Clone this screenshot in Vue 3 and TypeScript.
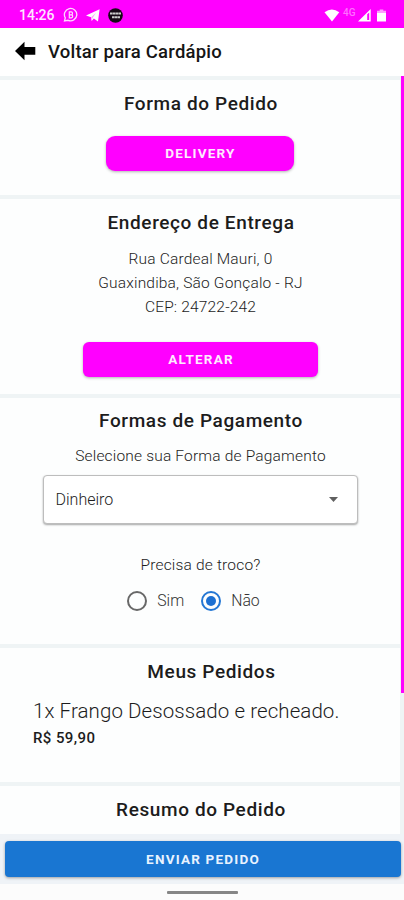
<script setup lang="ts">
import { ref } from 'vue'

interface OrderItem {
  quantity: number
  name: string
  price: string
}

const address: string[] = ['Rua Cardeal Mauri, 0', 'Guaxindiba, São Gonçalo - RJ', 'CEP: 24722-242']
const payment = ref('Dinheiro')
const change = ref('Não')
const changeOptions: string[] = ['Sim', 'Não']
const items: OrderItem[] = [{ quantity: 1, name: 'Frango Desossado e recheado.', price: 'R$ 59,90' }]
</script>

<template>
  <div class="screen">
    <div class="status">
      <span class="clock">14:26</span>
      <svg class="whats" width="16" height="16" viewBox="0 0 16 16" fill="none" stroke="#ffd9ff">
        <path d="M1.500 14l.8-3.200A6.200 6.200 0 1 1 5.200 13.300z" stroke-width="1.300" />
        <path d="M6.300 4.800h1.900q1.300 0 1.300 1.500t-1 1.500q1.200.1 1.200 1.500t-1.400 1.500H6.300zM6.500 7.800h2.200" stroke-width="1.200" />
      </svg>
      <svg class="telegram" width="14" height="13" viewBox="0 0 14 13">
        <path d="M0 6.600L13.600.3 12 12.400 7.900 9.600 5.600 12 5 8.300z" fill="#fff" />
        <path d="M5.200 8.300l4.900-4.500-3.600 5.200-.8 2z" fill="#ff9cff" />
      </svg>
      <svg class="badge" width="15" height="15" viewBox="0 0 15 15">
        <circle cx="7.500" cy="7.500" r="7.300" fill="#160a16" />
        <path d="M2 5.500h11M4 9.300h8" stroke="#ccc" stroke-width="2" stroke-dasharray="2.600 .3" fill="none" />
      </svg>
      <span class="spacer"></span>
      <svg class="wifi" width="16" height="13" viewBox="0 0 16 13">
        <path d="M.5 3.200Q7.800-2.300 15.300 3.200L8 12.500z" fill="#fff" />
      </svg>
      <span class="network">4G</span>
      <svg class="signal" width="13" height="13" viewBox="0 0 13 13">
        <path fill-rule="evenodd" d="M0 12.500L12.700 0v12.500zM9.200 5.300v5.600h2V3.400z" fill="#fff" />
      </svg>
      <svg class="battery" width="9" height="13" viewBox="0 0 9 13">
        <path d="M2.700.5h3.600v1.300H9v2.200H0V1.800h2.700z" fill="#ff9cff" />
        <path d="M0 4h9V12.500H0z" fill="#fff" />
      </svg>
    </div>

    <header class="header">
      <svg class="back" width="21" height="20" viewBox="0 0 21 20">
        <path d="M0 10L9.500.7V6H20.300v7.700H9.500V19.200z" fill="#000" />
      </svg>
      <span class="back-label">Voltar para Cardápio</span>
    </header>

    <main class="body">
      <div class="cards">
        <section class="card mode">
          <h2 class="title">Forma do Pedido</h2>
          <button class="btn delivery">DELIVERY</button>
        </section>

        <section class="card address">
          <h2 class="title">Endereço de Entrega</h2>
          <div class="lines">
            <p v-for="line in address" :key="line" class="text">{{ line }}</p>
          </div>
          <button class="btn alter">ALTERAR</button>
        </section>

        <section class="card payment">
          <h2 class="title">Formas de Pagamento</h2>
          <p class="text hint">Selecione sua Forma de Pagamento</p>
          <div class="select">
            <span>{{ payment }}</span>
            <svg width="9" height="5" viewBox="0 0 9 5"><path d="M0 0h9L4.500 5z" fill="#606060" /></svg>
          </div>
          <p class="text question">Precisa de troco?</p>
          <div class="radios">
            <label v-for="o in changeOptions" :key="o" class="option" @click="change = o">
              <span :class="['radio', { on: change === o }]"></span>
              <span class="radio-label">{{ o }}</span>
            </label>
          </div>
        </section>

        <section class="card orders">
          <h2 class="title orders-title">Meus Pedidos</h2>
          <div v-for="item in items" :key="item.name" class="item">
            <p class="item-name">{{ item.quantity }}x {{ item.name }}</p>
            <p class="item-price">{{ item.price }}</p>
          </div>
        </section>

        <section class="card summary">
          <h2 class="title">Resumo do Pedido</h2>
        </section>
      </div>
      <div class="track"><div class="thumb"></div></div>
    </main>

    <footer class="footer">
      <button class="btn send">ENVIAR PEDIDO</button>
    </footer>
    <div class="nav"><span class="pill"></span></div>
  </div>
</template>

<style>
body {
  margin: 0;
  background: #fff;
}
</style>

<style scoped>
* {
  box-sizing: border-box;
}
.screen {
  width: 404px;
  height: 900px;
  display: flex;
  flex-direction: column;
  overflow: hidden;
  background: #fdfefe;
  font-family: Roboto, "Liberation Sans", sans-serif;
  color: #1c1c1c;
}
p, h2 {
  margin: 0;
  white-space: nowrap;
}
.status {
  height: 28px;
  flex: none;
  display: flex;
  align-items: center;
  padding: 2px 17px 0 19px;
  background: #f0f;
  color: #ffe6ff;
}
.clock {
  width: 44px;
  font-size: 14px;
  font-weight: 500;
  line-height: 20px;
}
.telegram { margin-left: 7px; }
.badge { margin-left: 8px; }
.spacer { flex: 1; }
.network {
  width: 14px;
  margin: -5px 1px 0 2px;
  font-size: 10px;
  font-weight: 500;
  line-height: 10px;
  color: #ff70ff;
}
.wifi { margin-right: 1px; }
.battery { margin-left: 6px; margin-right: 1px; }
.header {
  height: 48px;
  flex: none;
  display: flex;
  align-items: center;
  padding: 0 15px 2px;
  background: #fff;
}
.back-label {
  margin: 1px 0 0 12px;
  font-size: 18.500px;
  font-weight: 500;
  line-height: 24px;
  letter-spacing: 0.220px;
  color: #151515;
  white-space: nowrap;
}
.body {
  height: 758px;
  flex: none;
  display: flex;
  background: #eff4f5;
}
.cards {
  width: 400px;
  display: flex;
  flex-direction: column;
  gap: 4px;
  padding-top: 4px;
}
.card {
  flex: none;
  display: flex;
  flex-direction: column;
  align-items: center;
  background: #fdfefe;
}
.mode { height: 115px; padding-top: 11px; }
.address { height: 195px; padding-top: 11px; }
.payment { height: 246px; padding-top: 10px; }
.orders { height: 134px; padding-top: 11px; }
.summary { height: 48px; padding-top: 11px; }
.title {
  padding-left: 2px;
  font-size: 19px;
  font-weight: 500;
  line-height: 26px;
  letter-spacing: 0.620px;
}
.orders-title { padding-left: 23px; }
.text {
  padding-left: 1px;
  font-size: 15.500px;
  font-weight: 300;
  line-height: 24px;
  letter-spacing: 0.180px;
  color: #1c1c1c;
}
.btn {
  border: 0;
  padding: 0;
  height: 35px;
  border-radius: 6px;
  background: #f0f;
  color: #ffe9ff;
  font-family: inherit;
  font-size: 13.500px;
  font-weight: 700;
  line-height: 35px;
  letter-spacing: 1.200px;
  box-shadow: 0 1px 3px rgba(0, 0, 0, 0.3);
}
.delivery {
  width: 188px;
  margin-top: 19px;
  padding-left: 1px;
  border-radius: 9px;
}
.lines {
  display: flex;
  flex-direction: column;
  align-items: center;
  margin-top: 11px;
}
.alter {
  width: 235px;
  margin-top: 23px;
  padding-left: 2px;
}
.hint { margin-top: 10px; }
.select {
  width: 315px;
  height: 49px;
  margin-top: 7px;
  padding: 0 19px 0 12px;
  display: flex;
  align-items: center;
  justify-content: space-between;
  border: 1px solid #bdbdbd;
  border-radius: 4px;
  background: #fff;
  box-shadow: 0 1px 2px rgba(0, 0, 0, 0.35);
  font-size: 16px;
  font-weight: 300;
}
.question { margin-top: 29px; }
.radios {
  display: flex;
  align-items: center;
  margin-top: 14px;
  gap: 17px;
  margin-left: -13px;
}
.option { display: flex; align-items: center; height: 20px; }
.radio {
  width: 20px;
  height: 20px;
  border: 2px solid #686868;
  border-radius: 50%;
  display: flex;
  align-items: center;
  justify-content: center;
}
.radio.on { border-color: #2477d4; }
.radio.on::after {
  content: "";
  width: 10px;
  height: 10px;
  border-radius: 50%;
  background: #1d70d2;
}
.radio-label {
  margin-left: 10px;
  font-size: 15.800px;
  font-weight: 300;
  line-height: 20px;
  color: #333;
}
.item { align-self: stretch; padding: 12px 0 0 33px; }
.item-name {
  font-size: 20.500px;
  font-weight: 300;
  line-height: 28px;
  letter-spacing: 0.080px;
}
.item-price {
  font-size: 15px;
  font-weight: 500;
  line-height: 26px;
  letter-spacing: 0.400px;
}
.track { width: 4px; padding-left: 1px; }
.thumb { height: 617px; width: 3px; background: #f0f; }
.footer {
  height: 50px;
  flex: none;
  padding: 7px 3px 0 5px;
  background: #eff3f7;
}
.send {
  display: block;
  width: 396px;
  height: 36px;
  border-radius: 4px;
  background: #1976d2;
  color: #e8f3ff;
  box-shadow: 0 1px 3px rgba(0, 0, 0, 0.35);
}
.nav {
  flex: 1;
  display: flex;
  justify-content: center;
  padding: 7px 0 0 1px;
  background: #fcfcfc;
}
.pill { width: 71px; height: 3px; border-radius: 1px; background: #868686; }
</style>
